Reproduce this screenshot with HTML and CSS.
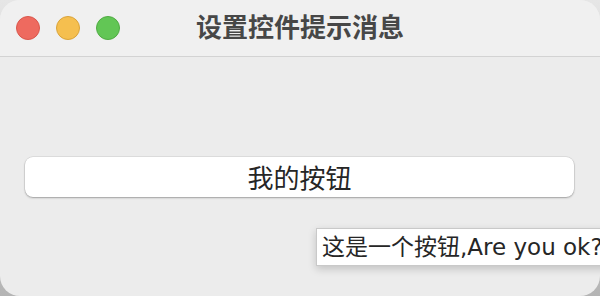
FILE: index.html
```html
<!DOCTYPE html>
<html lang="zh-CN">
<head>
<meta charset="utf-8">
<title>设置控件提示消息</title>
<link rel="stylesheet" href="styles.css">
</head>
<body>
<div class="window">
  <div class="titlebar">
    <div class="lights">
      <span class="light red"></span>
      <span class="light yellow"></span>
      <span class="light green"></span>
    </div>
    <div class="title">设置控件提示消息</div>
    <div class="spacer"></div>
  </div>
  <div class="content">
    <button class="btn">我的按钮</button>
  </div>
  <div class="tooltip">这是一个按钮,Are you ok?</div>
</div>
</body>
</html>
```

FILE: styles.css
```css
html, body {
  margin: 0;
  padding: 0;
}
body {
  width: 600px;
  height: 296px;
  overflow: hidden;
  background: linear-gradient(#e6e6e6, #b4b4b4);
  font-family: "Noto Sans CJK SC", "Noto Sans", sans-serif;
}
.window {
  position: relative;
  width: 600px;
  height: 296px;
  border-radius: 20px;
  overflow: hidden;
  background: #ececec;
}
.titlebar {
  height: 56px;
  background: #f0f0f0;
  border-bottom: 1px solid #d3d3d3;
  display: grid;
  grid-template-columns: 1fr auto 1fr;
  align-items: center;
}
.lights {
  display: flex;
  gap: 16px;
  padding-left: 16px;
}
.light {
  width: 24px;
  height: 24px;
  border-radius: 50%;
  box-sizing: border-box;
}
.red { background: #ee6a5f; border: 1px solid #d9574c; }
.yellow { background: #f5bf4f; border: 1px solid #d9a33a; }
.green { background: #62c655; border: 1px solid #50ab43; }
.title {
  font-size: 26px;
  font-weight: 700;
  color: #474747;
  line-height: 30px;
  margin-top: -4px;
}
.content {
  padding: 100px 26px 0 25px;
}
.btn {
  display: block;
  width: 100%;
  height: 40px;
  margin: 0;
  padding: 0;
  border: none;
  border-radius: 8px;
  background: #ffffff;
  box-shadow: 0 0 0 0.5px rgba(0,0,0,0.12), 0 1px 2px rgba(0,0,0,0.28);
  font-family: "Noto Sans CJK SC", "Noto Sans", sans-serif;
  font-size: 26px;
  line-height: 40px;
  color: #262626;
}
.tooltip {
  position: absolute;
  left: 316px;
  top: 228px;
  height: 38px;
  box-sizing: border-box;
  padding: 0 6px 0 5px;
  white-space: nowrap;
  background: #ffffff;
  border: 1px solid #c9c9c9;
  box-shadow: 0 3px 8px rgba(0,0,0,0.18);
  font-family: "DejaVu Sans", "Noto Sans CJK SC", sans-serif;
  font-size: 23px;
  line-height: 36px;
  color: #262626;
}
```
